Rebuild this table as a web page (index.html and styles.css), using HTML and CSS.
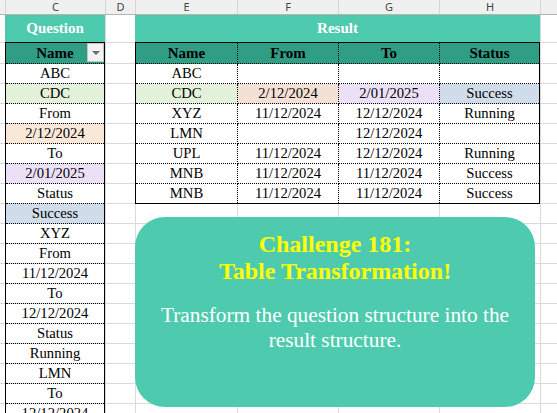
FILE: index.html
```html
<!DOCTYPE html>
<html>
<head>
<meta charset="utf-8">
<link rel="stylesheet" href="styles.css">
</head>
<body>
<div class="sheet">
  <div class="colheads">
    <div class="ch ch-first"></div>
    <div class="ch">C</div>
    <div class="ch">D</div>
    <div class="ch">E</div>
    <div class="ch">F</div>
    <div class="ch">G</div>
    <div class="ch">H</div>
    <div class="ch"></div>
  </div>
  <div class="grid">
    <div class="title q-title">Question</div>
    <div class="title r-title">Result</div>

    <div class="q-table">
      <div class="hd">Name<span class="filter"></span></div>
      <div class="qc">ABC</div>
      <div class="qc green">CDC</div>
      <div class="qc">From</div>
      <div class="qc peach">2/12/2024</div>
      <div class="qc">To</div>
      <div class="qc lilac">2/01/2025</div>
      <div class="qc">Status</div>
      <div class="qc blue">Success</div>
      <div class="qc">XYZ</div>
      <div class="qc">From</div>
      <div class="qc">11/12/2024</div>
      <div class="qc">To</div>
      <div class="qc">12/12/2024</div>
      <div class="qc">Status</div>
      <div class="qc">Running</div>
      <div class="qc">LMN</div>
      <div class="qc">To</div>
      <div class="qc">12/12/2024</div>
    </div>

    <div class="r-table">
      <div class="rc hd">Name</div>
      <div class="rc hd">From</div>
      <div class="rc hd">To</div>
      <div class="rc hd end">Status</div>

      <div class="rc">ABC</div>
      <div class="rc"></div>
      <div class="rc"></div>
      <div class="rc end"></div>

      <div class="rc green">CDC</div>
      <div class="rc peach2">2/12/2024</div>
      <div class="rc lilac">2/01/2025</div>
      <div class="rc end blue">Success</div>

      <div class="rc">XYZ</div>
      <div class="rc">11/12/2024</div>
      <div class="rc">12/12/2024</div>
      <div class="rc end">Running</div>

      <div class="rc">LMN</div>
      <div class="rc"></div>
      <div class="rc">12/12/2024</div>
      <div class="rc end"></div>

      <div class="rc">UPL</div>
      <div class="rc">11/12/2024</div>
      <div class="rc">12/12/2024</div>
      <div class="rc end">Running</div>

      <div class="rc">MNB</div>
      <div class="rc">11/12/2024</div>
      <div class="rc">11/12/2024</div>
      <div class="rc end">Success</div>

      <div class="rc last">MNB</div>
      <div class="rc last">11/12/2024</div>
      <div class="rc last">11/12/2024</div>
      <div class="rc last end">Success</div>
    </div>
  </div>

  <div class="callout">
    <h1 class="callout-title">Challenge 181:<br>Table Transformation!</h1>
    <p class="callout-text">Transform the question structure into the result structure.</p>
  </div>
</div>
</body>
</html>
```

FILE: styles.css
```css
html, body {
  margin: 0;
  padding: 0;
  background: #ffffff;
}

body {
  width: 557px;
  height: 413px;
  overflow: hidden;
  font-family: "Liberation Serif", "Times New Roman", serif;
  color: #000;
}

.sheet {
  position: relative;
  width: 557px;
  height: 413px;
  overflow: hidden;
}

/* column letters */
.colheads {
  display: grid;
  grid-template-columns: 5px 100px 30px 102px 101px 101px 101px 1fr;
  height: 15px;
  box-sizing: border-box;
  background: #f0f0f0;
  border-bottom: 1px solid #b4b4b4;
}

.ch {
  border-left: 1px solid #d6d6d6;
  font-family: "Noto Sans", "DejaVu Sans", sans-serif;
  font-size: 11px;
  line-height: 14px;
  color: #444;
  text-align: center;
}

.ch-first {
  border-left: 0;
}

/* cell area */
.grid {
  display: grid;
  grid-template-columns: 5px 100px 30px 102px 101px 101px 101px 1fr;
  grid-template-rows: 27px 21px repeat(18, 20px);
  height: 398px;
  background-image:
    linear-gradient(to right,
      transparent 0 5px, #dadada 5px 6px,
      transparent 6px 105px, #dadada 105px 106px,
      transparent 106px 135px, #dadada 135px 136px,
      transparent 136px 237px, #dadada 237px 238px,
      transparent 238px 338px, #dadada 338px 339px,
      transparent 339px 439px, #dadada 439px 440px,
      transparent 440px 540px, #dadada 540px 541px,
      transparent 541px),
    linear-gradient(#dadada, #dadada),
    repeating-linear-gradient(to bottom, #dadada 0 1px, transparent 1px 20px);
  background-size: 100% 100%, 100% 1px, 100% calc(100% - 48px);
  background-position: 0 0, 0 27px, 0 48px;
  background-repeat: no-repeat;
}

.title {
  background: #4ecbae;
  color: #ffffff;
  font-weight: bold;
  font-size: 15px;
  display: flex;
  align-items: center;
  justify-content: center;
  grid-row: 1;
}

.q-title {
  grid-column: 2;
}

.r-title {
  grid-column: 4 / 8;
}

.hd {
  background: #2f9e85;
  font-weight: bold;
  font-size: 15px;
}

/* question table */
.q-table {
  grid-column: 2;
  grid-row: 2 / -1;
  align-self: start;
  border: 1px solid #000;
  border-bottom: 0;
  display: flex;
  flex-direction: column;
}

.q-table .hd {
  position: relative;
  height: 21px;
  box-sizing: border-box;
  border-bottom: 1px dotted #000;
  display: flex;
  align-items: center;
  justify-content: center;
}

.qc {
  height: 20px;
  box-sizing: border-box;
  border-bottom: 1px dotted #000;
  display: flex;
  align-items: center;
  justify-content: center;
  font-size: 14.67px;
}

.filter {
  position: absolute;
  right: 0;
  top: 0;
  width: 17px;
  height: 19px;
  box-sizing: border-box;
  background: #f2f2f2;
  border: 1px solid #c4c4c4;
}

.filter::after {
  content: "";
  position: absolute;
  left: 4px;
  top: 7px;
  border-left: 4px solid transparent;
  border-right: 4px solid transparent;
  border-top: 4px solid #6a6a6a;
}

/* result table */
.r-table {
  grid-column: 4 / 8;
  grid-row: 2 / 11;
  align-self: start;
  border: 1px solid #000;
  display: grid;
  grid-template-columns: 102px 101px 101px 1fr;
}

.rc {
  height: 20px;
  box-sizing: border-box;
  border-right: 1px dotted #000;
  border-bottom: 1px dotted #000;
  display: flex;
  align-items: center;
  justify-content: center;
  font-size: 14.67px;
  background: #fff;
}

.rc.hd {
  height: 21px;
  background: #2f9e85;
  font-size: 15px;
}

.rc.end {
  border-right: 0;
}

.rc.last {
  border-bottom: 0;
  height: 19px;
}

/* fills */
.green { background: #e3f0da; }
.peach { background: #f9e8d7; }
.peach2 { background: #f5e0d6; }
.lilac { background: #ebe0f5; }
.blue { background: #d0dce9; }

/* callout */
.callout {
  position: absolute;
  left: 135px;
  top: 217px;
  width: 400px;
  height: 190px;
  box-sizing: border-box;
  padding: 14px 16px 0;
  border-radius: 30px;
  background: #4ecbae;
  text-align: center;
}

.callout-title {
  margin: 0;
  font-size: 24px;
  line-height: 27px;
  font-weight: bold;
  color: #ffff00;
}

.callout-text {
  margin: 18px 0 0;
  font-size: 21.33px;
  line-height: 25px;
  color: #ffffff;
}
```
